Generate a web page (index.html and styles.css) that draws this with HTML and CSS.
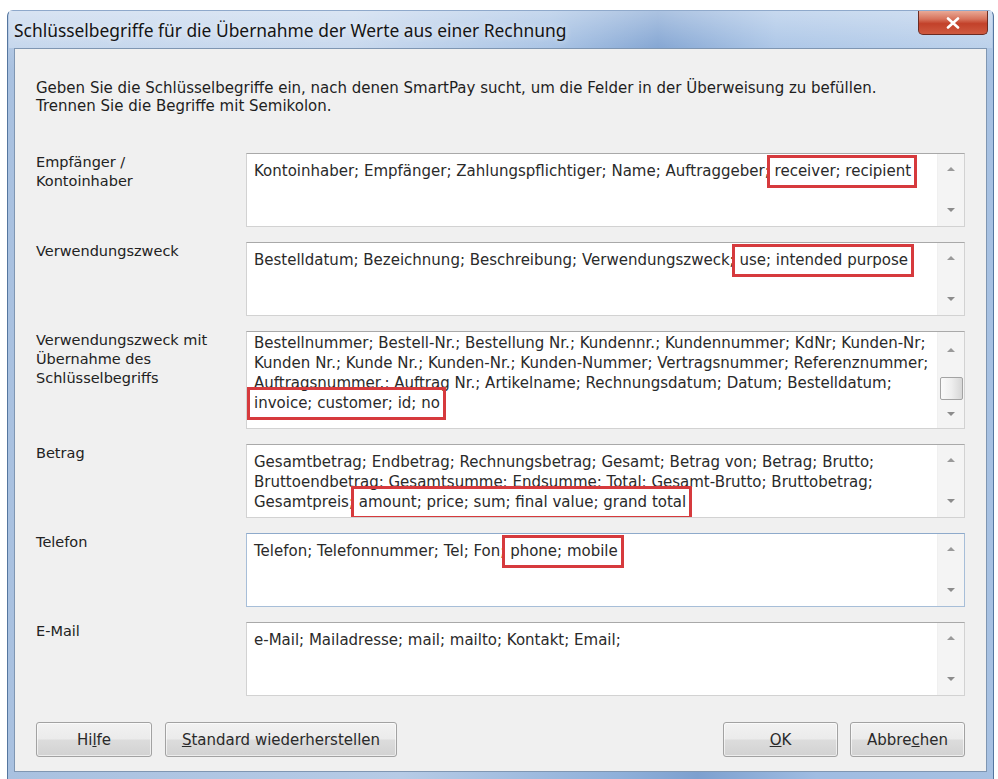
FILE: index.html
```html
<!DOCTYPE html>
<html lang="de">
<head>
<meta charset="utf-8">
<title>Schlüsselbegriffe</title>
<link rel="stylesheet" href="styles.css">
</head>
<body>
<div class="window">
  <div class="titlebar">
    <span class="title">Schlüsselbegriffe für die Übernahme der Werte aus einer Rechnung</span>
    <div class="close">
      <svg width="14" height="12" viewBox="0 0 14 12"><path d="M2 1.5 L12 10.5 M12 1.5 L2 10.5" stroke="#fff" stroke-width="2.6" stroke-linecap="round"/></svg>
    </div>
  </div>
  <div class="client">
    <p class="intro">Geben Sie die Schlüsselbegriffe ein, nach denen SmartPay sucht, um die Felder in der Überweisung zu befüllen.<br>Trennen Sie die Begriffe mit Semikolon.</p>
    <div class="fields">
      <div class="row">
        <div class="label">Empfänger /<br>Kontoinhaber</div>
        <div class="box">
          <div class="text">Kontoinhaber; Empfänger; Zahlungspflichtiger; Name; Auftraggeber;<span class="hl"> receiver; recipient</span></div>
          <div class="scroll"><span class="arrow up"></span><span class="arrow down"></span></div>
        </div>
      </div>
      <div class="row">
        <div class="label">Verwendungszweck</div>
        <div class="box">
          <div class="text">Bestelldatum; Bezeichnung; Beschreibung; Verwendungszweck;<span class="hl"> use; intended purpose</span></div>
          <div class="scroll"><span class="arrow up"></span><span class="arrow down"></span></div>
        </div>
      </div>
      <div class="row">
        <div class="label">Verwendungszweck mit<br>Übernahme des<br>Schlüsselbegriffs</div>
        <div class="box tall">
          <div class="text">Bestellnummer; Bestell-Nr.; Bestellung Nr.; Kundennr.; Kundennummer; KdNr; Kunden-Nr;<br>Kunden Nr.; Kunde Nr.; Kunden-Nr.; Kunden-Nummer; Vertragsnummer; Referenznummer;<br>Auftragsnummer.; Auftrag Nr.; Artikelname; Rechnungsdatum; Datum; Bestelldatum;<br><span class="hl first">invoice; customer; id; no</span></div>
          <div class="scroll"><span class="arrow up"></span><span class="thumb"></span><span class="arrow down"></span></div>
        </div>
      </div>
      <div class="row">
        <div class="label">Betrag</div>
        <div class="box">
          <div class="text">Gesamtbetrag; Endbetrag; Rechnungsbetrag; Gesamt; Betrag von; Betrag; Brutto;<br>Bruttoendbetrag; Gesamtsumme; Endsumme; Total; Gesamt-Brutto; Bruttobetrag;<br>Gesamtpreis;<span class="hl"> amount; price; sum; final value; grand total</span></div>
          <div class="scroll"><span class="arrow up"></span><span class="arrow down"></span></div>
        </div>
      </div>
      <div class="row">
        <div class="label">Telefon</div>
        <div class="box focus">
          <div class="text">Telefon; Telefonnummer; Tel; Fon;<span class="hl"> phone; mobile</span></div>
          <div class="scroll"><span class="arrow up"></span><span class="arrow down"></span></div>
        </div>
      </div>
      <div class="row">
        <div class="label">E-Mail</div>
        <div class="box">
          <div class="text">e-Mail; Mailadresse; mail; mailto; Kontakt; Email;</div>
          <div class="scroll"><span class="arrow up"></span><span class="arrow down"></span></div>
        </div>
      </div>
    </div>
    <div class="buttons">
      <button class="btn w-help">Hi<u>l</u>fe</button>
      <button class="btn w-std"><u>S</u>tandard wiederherstellen</button>
      <span class="spacer"></span>
      <button class="btn w-ok"><u>O</u>K</button>
      <button class="btn w-cancel">Abbre<u>c</u>hen</button>
    </div>
  </div>
</div>
</body>
</html>
```
FILE: styles.css
```css
html, body {
  margin: 0;
  padding: 0;
  background: #ffffff;
}
body {
  font-family: "DejaVu Sans", "Liberation Sans", sans-serif;
  font-size: 15px;
  color: #222;
}
.window {
  margin: 10px 0 0 7px;
  width: 987px;
  box-sizing: border-box;
  border: 1px solid #55769f;
  border-top-color: #8fa9cb;
  border-radius: 6px 6px 0 0;
  padding: 0 6px 7px 6px;
  background:
    linear-gradient(to bottom, rgba(255,255,255,0.25), rgba(255,255,255,0) 60px),
    linear-gradient(to right, #a9c1e0 0%, #b6cbe6 40%, #8fb0da 62%, #7da0cf 70%, #9fbce2 82%, #a7c1e2 100%);
}
.titlebar {
  height: 37px;
  margin: 0 -5px;
  padding: 0 4px 0 5px;
  display: flex;
  align-items: center;
  background:
    linear-gradient(to bottom, rgba(255,255,255,0.35), rgba(255,255,255,0.05)),
    linear-gradient(to right, #c3d5ec 0%, #c6d7ed 35%, #a7c2e4 55%, #7fa2d1 66%, #a9c4e6 78%, #b9cfea 100%);
}
.title {
  font-family: "Noto Sans", "DejaVu Sans", sans-serif;
  font-size: 17.4px;
  color: #141414;
  text-shadow: 0 0 6px rgba(255,255,255,0.8);
}
.close {
  margin-left: auto;
  align-self: flex-start;
  width: 70px;
  height: 24px;
  box-sizing: border-box;
  border: 1px solid #6b2b22;
  border-top: none;
  border-radius: 0 0 5px 5px;
  background: linear-gradient(to bottom, #e9a996 0%, #d7735c 35%, #c2412a 55%, #cf5a40 100%);
  display: flex;
  align-items: center;
  justify-content: center;
}
.client {
  background: #f0f0f0;
  border: 1px solid #7f96b2;
  padding: 30px 21px 14px 21px;
}
.intro {
  margin: 0 0 38px 0;
  line-height: 18px;
  color: #1e1e1e;
}
.fields {
  display: flex;
  flex-direction: column;
  gap: 15px;
}
.row {
  display: flex;
}
.label {
  width: 210px;
  flex: none;
  font-size: 14.5px;
  line-height: 19px;
  padding-top: 0;
  color: #222;
}
.box {
  flex: 1;
  display: flex;
  height: 74px;
  box-sizing: border-box;
  background: #fff;
  border: 1px solid #d2d2d2;
  border-top-color: #a9a9a9;
}
.box.tall {
  height: 98px;
}
.box.focus {
  border-color: #a7bed8;
  border-top-color: #8eaacb;
}
.text {
  flex: 1;
  padding: 7px 4px 0 7px;
  line-height: 20px;
  white-space: nowrap;
  overflow: hidden;
  color: #2a2a2a;
}
.box.tall .text {
  padding-top: 1px;
}
.hl {
  border: 3px solid #d63a3d;
  padding: 4px 3px 5px 0;
  margin: 0 -6px 0 -3px;
}
.hl.first {
  margin-left: -7px;
  padding-left: 4px;
}
.scroll {
  width: 27px;
  flex: none;
  background: #f4f4f4;
  border-left: 1px solid #f0f0f0;
  display: flex;
  flex-direction: column;
  align-items: center;
  padding: 13px 0 14px;
  box-sizing: border-box;
}
.box.tall .scroll {
  padding-top: 16px;
  padding-bottom: 12px;
}
.arrow {
  width: 0;
  height: 0;
  border-left: 4px solid transparent;
  border-right: 4px solid transparent;
}
.arrow.up {
  border-bottom: 4px solid #9a9a9a;
}
.arrow.down {
  margin-top: auto;
  border-top: 4px solid #8c8c8c;
}
.thumb {
  margin-top: 25px;
  width: 23px;
  height: 23px;
  box-sizing: border-box;
  border: 1px solid #a3a3a3;
  border-radius: 2px;
  background: linear-gradient(to right, #fafafa 0%, #eeeeee 50%, #d6d6d6 100%);
}
.buttons {
  display: flex;
  margin-top: 26px;
}
.spacer {
  flex: 1;
}
.btn {
  height: 35px;
  box-sizing: border-box;
  border: 1px solid #a2a2a2;
  border-radius: 3px;
  background: linear-gradient(to bottom, #f2f2f2 0%, #ebebeb 48%, #dcdcdc 52%, #d2d2d2 100%);
  font-family: "DejaVu Sans", "Liberation Sans", sans-serif;
  font-size: 15px;
  color: #2a2a2a;
  padding: 0;
  box-shadow: inset 0 0 0 1px rgba(255,255,255,0.6);
}
.w-help { width: 116px; }
.w-std { width: 232px; margin-left: 13px; }
.w-ok { width: 115px; }
.w-cancel { width: 115px; margin-left: 12px; }
```
